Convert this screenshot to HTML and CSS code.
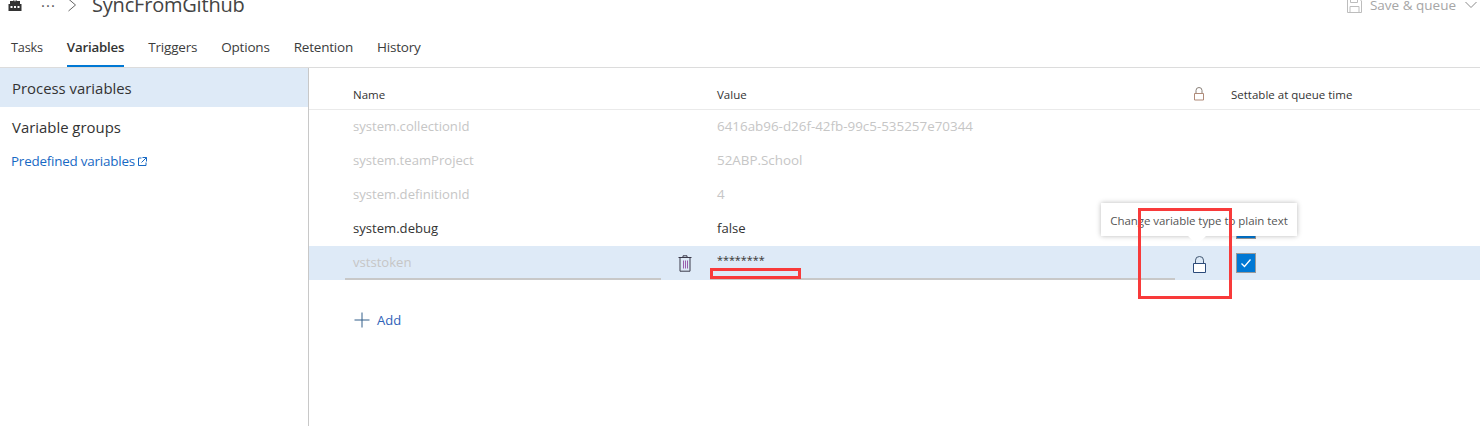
FILE: index.html
```html
<!DOCTYPE html>
<html lang="en">
<head>
<meta charset="utf-8">
<title>SyncFromGithub</title>
<link rel="stylesheet" href="styles.css">
</head>
<body>
<div class="page">
  <header class="topbar">
    <div class="crumbs">
      <svg class="build-icon" width="14" height="12" viewBox="0 0 14 12"><path d="M5.500 0h3v2h-3zM2 2h10v3H2zM.5 5h13v7H.5z" fill="#333"/><path d="M6.300 .8h1.400v1.400H6.300zM2.500 7h2v2h-2zM6 7h2v2H6zM9.500 7h2v2h-2z" fill="#fff"/></svg>
      <span class="more">···</span>
      <svg class="chev" width="10" height="14" viewBox="0 0 10 14"><path d="M1.500 1l7 6-7 6" fill="none" stroke="#666" stroke-width="1"/></svg>
      <span class="title">SyncFromGithub</span>
    </div>
    <div class="save">
      <svg width="15" height="15" viewBox="0 0 15 15"><path d="M.5.5h11.500l2.500 2.500v11.500H.5zM3.500.5v4h7v-4M3 14.500v-6h9v6" fill="none" stroke="#bdbdbd"/></svg>
      <span>Save &amp; queue</span>
      <svg width="12" height="8" viewBox="0 0 12 8"><path d="M.5 1l5.500 5.500L11.500 1" fill="none" stroke="#8a8a8a"/></svg>
    </div>
  </header>
  <nav class="tabs">
    <a class="tab first">Tasks</a>
    <a class="tab active">Variables</a>
    <a class="tab">Triggers</a>
    <a class="tab">Options</a>
    <a class="tab">Retention</a>
    <a class="tab">History</a>
  </nav>
  <div class="content">
    <aside class="side">
      <div class="side-item selected">Process variables</div>
      <div class="side-item">Variable groups</div>
      <a class="predefined">Predefined variables<svg width="9" height="9" viewBox="0 0 9 9"><path d="M3.500 1H.5v7.500H8V5.500M4.500.5h4v4M8.500.5L3.500 5.500" fill="none" stroke="#1769c4"/></svg></a>
    </aside>
    <main class="main">
      <div class="row head">
        <div class="c-name">Name</div>
        <div class="c-trash"></div>
        <div class="c-value">Value</div>
        <div class="c-lock"><svg width="12" height="14" viewBox="0 0 12 14"><path d="M3 6V3.500a3 3 0 0 1 6 0V6" fill="none" stroke="#8a8078"/><path d="M1.500 6.500h9v6.500h-9z" fill="none" stroke="#b08a78"/></svg></div>
        <div class="c-set">Settable at queue time</div>
      </div>
      <div class="row dim">
        <div class="c-name">system.collectionId</div><div class="c-trash"></div>
        <div class="c-value">6416ab96-d26f-42fb-99c5-535257e70344</div>
      </div>
      <div class="row dim">
        <div class="c-name">system.teamProject</div><div class="c-trash"></div>
        <div class="c-value">52ABP.School</div>
      </div>
      <div class="row dim">
        <div class="c-name">system.definitionId</div><div class="c-trash"></div>
        <div class="c-value">4</div>
      </div>
      <div class="row">
        <div class="c-name">system.debug</div><div class="c-trash"></div>
        <div class="c-value">false</div>
        <div class="c-lock"></div>
        <div class="c-set"><span class="check"></span></div>
      </div>
      <div class="row hl">
        <div class="c-name line dimtext">vststoken</div>
        <div class="c-trash"><svg class="trash" width="14" height="17" viewBox="0 0 14 17"><path d="M5 2V.8h4V2M.5 2.500h13M2 2.500v13.700h10V2.500" fill="none" stroke="#3a3a4a"/><path d="M5.500 5.500v8M7.500 5.500v8M9.500 5.500v8" stroke="#8a3a9a" fill="none" stroke-width=".8"/></svg></div>
        <div class="c-value line secret">********</div>
        <div class="c-lock"><svg class="lock" width="13" height="17" viewBox="0 0 13 17"><path d="M2.500 7.500V4.200a4 3.700 0 0 1 8 0v3.300" fill="none" stroke="#3f5570"/><path d="M.5 7.500h12v9H.5z" fill="#fff" stroke="#2b4a7a"/></svg></div>
        <div class="c-set"><span class="check"><svg width="12" height="10" viewBox="0 0 12 10"><path d="M1.500 5.500l3 3 6-7" fill="none" stroke="#fff" stroke-width="1.300"/></svg></span></div>
      </div>
      <div class="add">
        <svg width="16" height="16" viewBox="0 0 16 16"><path d="M8 .5v15M.5 8h15" stroke="#335f8a" fill="none"/></svg>
        <span>Add</span>
      </div>
    </main>
  </div>
  <div class="tooltip">Change variable type to plain text<span class="arrow"></span></div>
  <div class="mark mark-small"></div>
  <div class="mark mark-big"></div>
</div>
</body>
</html>
```

FILE: styles.css
```css
* { box-sizing: border-box; }
html, body { margin: 0; padding: 0; background: #fff; }
body { font-family: "Open Sans", "Noto Sans", "Liberation Sans", sans-serif; color: #333; }
.page { position: relative; width: 1480px; height: 426px; overflow: hidden; display: flex; flex-direction: column; }

.topbar { height: 30px; display: flex; justify-content: space-between; align-items: flex-start; padding: 0 3px 0 8px; margin-top: -7px; flex: none; }
.crumbs { display: flex; align-items: center; height: 24px; }
.build-icon { margin-right: 19px; margin-top: 0; }
.more { font-size: 15px; color: #555; letter-spacing: 1px; width: 19px; }
.chev { margin: 0 0 0 7px; }
.title { font-size: 20px; color: #444; margin-left: 15px; line-height: 24px; letter-spacing: -.2px; }
.save { display: flex; align-items: center; height: 24px; font-size: 13.500px; color: #a6a6a6; gap: 8px; }
.save span { margin-right: 1px; }

.tabs { height: 52px; margin-top: -7px; flex: none; display: flex; gap: 24px; padding: 14px 0 0 11px; border-bottom: 1px solid #dcdcdc; }
.tab { font-size: 13.500px; line-height: 34px; height: 37px; letter-spacing: -.2px; color: #3c3c3c; }
.tab.first { font-size: 12.700px; }
.tab.active { font-size: 13.300px; font-weight: 600; color: #333; border-bottom: 2px solid #0078d4; }

.content { flex: 1; display: flex; min-height: 0; }
.side { width: 309px; flex: none; border-right: 1px solid #c8c8c8; }
.side-item { height: 39px; padding-left: 12px; font-size: 14.900px; line-height: 41px; color: #333; }
.side-item.selected { background: #deeaf7; }
.predefined { display: flex; align-items: center; gap: 3px; padding-left: 11px; margin-top: 5px; font-size: 13.400px; line-height: 20px; letter-spacing: -.2px; color: #1769c4; }

.main { flex: 1; padding-top: 9px; min-width: 0; }
.row { display: flex; height: 34px; align-items: center; padding-left: 36px; font-size: 13.100px; color: #333; }
.row.head { height: 33px; font-size: 11.500px; border-bottom: 1px solid #eaeaea; }
.row.head > div { padding-top: 2px; }
.row:not(.head):not(.hl) .c-name, .row:not(.head):not(.hl) .c-value { padding-bottom: 2px; }
.row.dim { color: #c6c6c6; }
.row.dim .c-value { font-size: 13.400px; }
.row.hl { background: #deeaf7; }
.c-name { width: 316px; padding-left: 8px; height: 100%; display: flex; align-items: center; flex: none; }
.c-trash { width: 49px; height: 100%; display: flex; align-items: center; justify-content: center; flex: none; }
.trash { margin-right: 2px; }
.lock { margin-top: 2px; }
.c-value { width: 465px; padding-left: 7px; height: 100%; display: flex; align-items: center; flex: none; }
.c-lock { width: 48px; height: 100%; display: flex; align-items: center; justify-content: center; flex: none; }
.c-set { padding-left: 8px; flex: 1; height: 100%; display: flex; align-items: center; }
.row:not(.head) .c-set { padding-left: 13px; }
.line { border-bottom: 2px solid #c8c8c8; }
.dimtext { color: #c6c6c6; }
.secret { align-items: flex-start; padding-top: 6px; font-size: 10.800px; }
.check { display: flex; align-items: center; justify-content: center; width: 20px; height: 20px; background: #0078d4; border: 1px solid #999; }

.add { display: flex; align-items: center; gap: 7px; margin: 30px 0 0 45px; font-size: 13px; line-height: 20px; color: #2e62b8; }

.tooltip { position: absolute; z-index: 2; left: 1101px; top: 203px; width: 196px; height: 33px; background: #fff; box-shadow: 0 0 5px rgba(0,0,0,.28); font-size: 11.500px; line-height: 36px; text-align: center; color: #555; white-space: nowrap; letter-spacing: -.05px; }
.arrow { position: absolute; left: 89px; top: 25px; width: 14px; height: 14px; background: #fff; transform: rotate(45deg); z-index: -1; }
.mark { position: absolute; z-index: 3; border: 3px solid #f83a3a; }
.mark-small { left: 710px; top: 268px; width: 91px; height: 11px; }
.mark-big { left: 1138px; top: 208px; width: 94px; height: 91px; }
```
